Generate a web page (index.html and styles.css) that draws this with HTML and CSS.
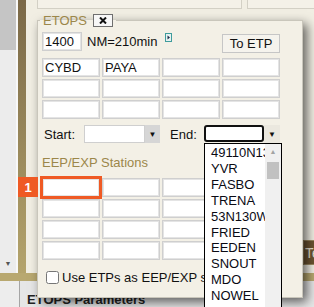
FILE: index.html
```html
<!DOCTYPE html>
<html lang="en">
<head>
  <meta charset="UTF-8">
  <meta name="viewport" content="width=device-width, initial-scale=1.0">
  <title>ETOPS</title>
  <link rel="stylesheet" href="styles.css">
</head>
<body>

  <div class="page">
    <div class="upper">
      <div class="vscroll">
        <div class="thumb"></div>
        <div class="track"><span class="arrow">&#9660;</span></div>
      </div>
      <div class="gutter"></div>
      <div class="splitter"></div>
      <div class="main">
        <div class="topboxes">
          <div class="topbox"></div>
          <div class="topbox rest"></div>
        </div>
        <div class="behind">
          <button class="testBtn">Test</button>
        </div>
      </div>
    </div>
    <div class="hsplit"></div>
    <div class="lower">
      <div class="lowerSide"></div>
      <div class="lowerTitle">ETOPS Parameters</div>
    </div>
  </div>

  <fieldset class="etops">
    <legend>
      <span>ETOPS</span>
      <button class="closeBtn" type="button">
        <svg width="8" height="7" viewBox="0 0 8 7"><path d="M1 0.5L7 6.5M7 0.5L1 6.5" stroke="#111" stroke-width="2"/></svg>
      </button>
    </legend>

    <div class="toprow">
      <div class="nmCell">
        <input class="field nm" type="text" value="1400">
        <span>NM=210min</span>
      </div>
      <div class="iconCell">
        <svg width="7" height="9" viewBox="0 0 7 9"><rect x="0.5" y="0.5" width="6" height="8" fill="#e6f2f2" stroke="#3f9c9c"/><path d="M2.5 2.5L5 4.5L2.5 6.5Z" fill="#1d2b48"/></svg>
      </div>
      <button class="btn" type="button">To ETP</button>
    </div>

    <div class="cells">
      <input class="field" type="text" value="CYBD">
      <input class="field" type="text" value="PAYA">
      <input class="field" type="text">
      <input class="field" type="text">
      <input class="field" type="text">
      <input class="field" type="text">
      <input class="field" type="text">
      <input class="field" type="text">
      <input class="field" type="text">
      <input class="field" type="text">
      <input class="field" type="text">
      <input class="field" type="text">
    </div>

    <div class="range">
      <label class="rangeLabel start">Start:</label>
      <div class="select">
        <span class="val"></span>
        <span class="drop">&#9660;</span>
      </div>
      <label class="rangeLabel end">End:</label>
      <div class="select focus">
        <span class="val"></span>
        <span class="drop">&#9660;</span>
        <div class="listbox">
          <ul class="options">
            <li>49110N130W</li>
            <li>YVR</li>
            <li>FASBO</li>
            <li>TRENA</li>
            <li>53N130W</li>
            <li>FRIED</li>
            <li>EEDEN</li>
            <li>SNOUT</li>
            <li>MDO</li>
            <li>NOWEL</li>
            <li>PAYA</li>
          </ul>
          <div class="lbScroll">
            <span class="lbUp">&#9650;</span>
            <div class="lbThumb"></div>
          </div>
        </div>
      </div>
    </div>

    <div class="subTitle">EEP/EXP Stations</div>

    <div class="cells stations">
      <div class="slot">
        <input class="field marked" type="text">
        <span class="badge">1</span>
      </div>
      <input class="field" type="text">
      <input class="field" type="text">
      <input class="field" type="text">
      <input class="field" type="text">
      <input class="field" type="text">
      <input class="field" type="text">
      <input class="field" type="text">
      <input class="field" type="text">
      <input class="field" type="text">
      <input class="field" type="text">
      <input class="field" type="text">
      <input class="field" type="text">
      <input class="field" type="text">
      <input class="field" type="text">
      <input class="field" type="text">
    </div>

    <label class="check">
      <input type="checkbox">
      <span>Use ETPs as EEP/EXP stations</span>
    </label>
  </fieldset>

</body>
</html>
```

FILE: styles.css
```css
body {
  margin: 0;
  width: 314px;
  height: 307px;
  overflow: hidden;
  position: relative;
  font-family: "Liberation Sans", Arial, sans-serif;
  font-size: 13px;
  color: #111;
  background: #f1eee3;
}

/* page behind the popup */
.page {
  display: flex;
  flex-direction: column;
  height: 307px;
}
.upper {
  display: flex;
  height: 283px;
}
.vscroll {
  width: 16px;
  display: flex;
  flex-direction: column;
  background: #ececec;
}
.thumb {
  height: 50px;
  background: #c5c5c5;
}
.track {
  flex: 1;
  display: flex;
  align-items: flex-end;
  justify-content: center;
  padding-bottom: 6px;
}
.arrow {
  font-size: 7px;
  line-height: 7px;
  color: #555;
}
.gutter {
  width: 2px;
  background: #f8f8f8;
}
.splitter {
  width: 8px;
  background: linear-gradient(#7a6847, #b4a46c);
}
.main {
  flex: 1;
  display: flex;
  flex-direction: column;
  padding-left: 11px;
  overflow: hidden;
}
.topboxes {
  display: flex;
  gap: 5px;
  height: 9px;
}
.topbox {
  width: 205px;
  box-sizing: border-box;
  border: 1px solid #d3d0c5;
  border-top: none;
  background: #f4f1e8;
}
.topbox.rest {
  flex: 1;
  margin-right: -5px;
}
.behind {
  flex: 1;
  display: flex;
  justify-content: flex-end;
  align-items: flex-end;
  padding-bottom: 8px;
}
.testBtn {
  width: 45px;
  height: 25px;
  margin-right: -34px;
  padding: 0 0 0 1px;
  text-align: left;
  font: 14px "Liberation Sans", Arial, sans-serif;
  color: #e9e2d2;
  background: #6c5431;
  border: 1px solid #9c8a62;
}
.hsplit {
  height: 8px;
  background: #b8a870;
}
.lower {
  flex: 1;
  display: flex;
  background: #e6e6e6;
}
.lowerSide {
  width: 19px;
  background: #ededed;
  border-right: 1px solid #a5a5a5;
}
.lowerTitle {
  padding: 11px 0 0 7px;
  font-weight: bold;
  color: #222;
}

/* ETOPS popup */
.etops {
  position: absolute;
  left: 37px;
  top: 13px;
  width: 266px;
  height: 285px;
  box-sizing: border-box;
  margin: 0;
  padding: 5px 4px 0;
  border: 1px solid #c9c6bb;
  background: #f3f0e6;
  box-shadow: 4px 4px 10px rgba(0, 0, 0, 0.6);
}
.etops legend {
  display: flex;
  align-items: center;
  gap: 6px;
  height: 14px;
  padding: 0 3px;
  margin-left: -2px;
  color: #9c874a;
}
.closeBtn {
  width: 20px;
  height: 13px;
  padding: 0;
  display: flex;
  align-items: center;
  justify-content: center;
  border: 1px solid #6f6f6f;
  background: #f7f7f7;
}
.closeBtn svg {
  display: block;
}

.field {
  box-sizing: border-box;
  width: 58px;
  height: 19px;
  margin: 0;
  padding: 0 2px;
  border: 1px solid #cfcfcf;
  box-shadow: inset 0 0 0 1px #e4e4e4;
  background: #fff;
  font: 13px "Liberation Sans", Arial, sans-serif;
  color: #111;
  outline: none;
}

.toprow,
.cells {
  display: grid;
  grid-template-columns: repeat(4, 58px);
  column-gap: 2px;
}
.toprow {
  height: 21px;
  align-items: start;
}
.nmCell {
  grid-column: span 2;
  display: flex;
  align-items: center;
  gap: 5px;
  white-space: nowrap;
}
.field.nm {
  width: 40px;
}
.iconCell {
  padding: 1px 0 0 3px;
}
.iconCell svg {
  display: block;
}
.btn {
  height: 19px;
  margin-top: 2px;
  padding: 0;
  background: #f5f3ed;
  border: 1px solid #c6c6c6;
  font: 13px "Liberation Sans", Arial, sans-serif;
  color: #111;
}

.cells {
  margin-top: 5px;
  grid-auto-rows: 19px;
  row-gap: 2px;
}

.range {
  display: flex;
  align-items: center;
  height: 18px;
  margin-top: 6px;
}
.rangeLabel.start {
  width: 40px;
  padding-left: 2px;
}
.rangeLabel.end {
  width: 34px;
  margin-left: 10px;
}
.select {
  position: relative;
  display: flex;
  height: 18px;
}
.select .val {
  box-sizing: border-box;
  width: 61px;
  background: #fff;
  border: 1px solid #cfcfcf;
}
.select .drop {
  width: 15px;
  display: flex;
  align-items: center;
  justify-content: center;
  font-size: 8px;
  color: #111;
  background: #d6d6d6;
}
.select.focus .val {
  border: 2px solid #111;
  border-radius: 3px;
  width: 60px;
  height: 17px;
}
.select.focus .drop {
  width: 16px;
  background: #ebe8df;
}

.listbox {
  position: absolute;
  left: 0;
  top: 18px;
  width: 78px;
  height: 170px;
  box-sizing: border-box;
  display: flex;
  background: #fff;
  border: 1px solid #000;
  z-index: 2;
}
.options {
  flex: 1;
  margin: 0;
  padding: 1px 0 0 6px;
  list-style: none;
  overflow: hidden;
  white-space: nowrap;
}
.options li {
  line-height: 15.9px;
  color: #0a0a14;
}
.lbScroll {
  width: 16px;
  display: flex;
  flex-direction: column;
  align-items: center;
  background: #f0f0f0;
}
.lbUp {
  margin-top: 4px;
  font-size: 7px;
  line-height: 7px;
  color: #a3a3a3;
}
.lbThumb {
  width: 12px;
  height: 17px;
  margin-top: 7px;
  background: #c1c1c1;
}

.subTitle {
  margin-top: 12px;
  line-height: 15px;
  color: #9c874a;
}

.cells.stations {
  margin-top: 8px;
}
.slot {
  position: relative;
}
.field.marked {
  outline: 3px solid #ef5a24;
  outline-offset: -1px;
}
.badge {
  position: absolute;
  left: -24px;
  top: -1px;
  width: 20px;
  height: 20px;
  display: flex;
  align-items: center;
  justify-content: center;
  background: #ef5a24;
  color: #fff;
  font-weight: bold;
  font-size: 13px;
}

.check {
  display: flex;
  align-items: center;
  gap: 3px;
  margin-top: 10px;
  padding-left: 4px;
  line-height: 15px;
  white-space: nowrap;
}
.check input {
  width: 13px;
  height: 13px;
  margin: 0;
}
```
